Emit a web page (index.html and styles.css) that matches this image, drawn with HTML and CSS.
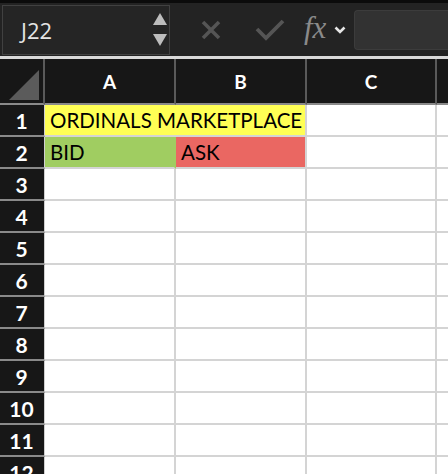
FILE: index.html
```html
<!DOCTYPE html>
<html>
<head>
<meta charset="utf-8">
<link rel="stylesheet" href="styles.css">
</head>
<body>
<div class="app">
  <div class="toolbar">
    <div class="namebox">
      <span class="ref">J22</span>
      <div class="spin">
        <svg width="14" height="12" viewBox="0 0 14 12"><polygon points="7,0 14,12 0,12" fill="#bdbdbd"/></svg>
        <svg width="14" height="12" viewBox="0 0 14 12"><polygon points="0,0 14,0 7,12" fill="#bdbdbd"/></svg>
      </div>
    </div>
    <div class="tools">
      <svg class="ic-x" width="20" height="20" viewBox="0 0 20 20"><path d="M2 2 L18 18 M18 2 L2 18" stroke="#555" stroke-width="3.6"/></svg>
      <svg class="ic-check" width="30" height="22" viewBox="0 0 30 22"><path d="M2 10 L11 19 L28 2" stroke="#555" stroke-width="3.8" fill="none"/></svg>
      <span class="fx">fx</span>
      <svg class="ic-chev" width="12" height="8" viewBox="0 0 12 8"><path d="M1.5 1.5 L6 6 L10.5 1.5" stroke="#e6e6e6" stroke-width="2.6" fill="none"/></svg>
      <div class="formula"></div>
    </div>
  </div>
  <div class="sep"></div>
  <div class="sheet">
    <div class="row head">
      <div class="rh corner"><svg width="30" height="30" viewBox="0 0 30 30"><polygon points="30,0 30,30 0,30" fill="#5b5b5b"/></svg></div>
      <div class="ch">A</div><div class="ch">B</div><div class="ch">C</div><div class="ch last"></div>
    </div>
    <div class="row"><div class="rh">1</div><div class="c span yellow">ORDINALS MARKETPLACE</div><div class="c"></div><div class="c"></div></div>
    <div class="row"><div class="rh">2</div><div class="c green">BID</div><div class="c red">ASK</div><div class="c"></div><div class="c"></div></div>
    <div class="row"><div class="rh">3</div><div class="c"></div><div class="c"></div><div class="c"></div><div class="c"></div></div>
    <div class="row"><div class="rh">4</div><div class="c"></div><div class="c"></div><div class="c"></div><div class="c"></div></div>
    <div class="row"><div class="rh">5</div><div class="c"></div><div class="c"></div><div class="c"></div><div class="c"></div></div>
    <div class="row"><div class="rh">6</div><div class="c"></div><div class="c"></div><div class="c"></div><div class="c"></div></div>
    <div class="row"><div class="rh">7</div><div class="c"></div><div class="c"></div><div class="c"></div><div class="c"></div></div>
    <div class="row"><div class="rh">8</div><div class="c"></div><div class="c"></div><div class="c"></div><div class="c"></div></div>
    <div class="row"><div class="rh">9</div><div class="c"></div><div class="c"></div><div class="c"></div><div class="c"></div></div>
    <div class="row"><div class="rh">10</div><div class="c"></div><div class="c"></div><div class="c"></div><div class="c"></div></div>
    <div class="row"><div class="rh">11</div><div class="c"></div><div class="c"></div><div class="c"></div><div class="c"></div></div>
    <div class="row"><div class="rh">12</div><div class="c"></div><div class="c"></div><div class="c"></div><div class="c"></div></div>
  </div>
</div>
</body>
</html>
```

FILE: styles.css
```css
* { box-sizing: border-box; }
html, body { margin: 0; padding: 0; background: #fff; }
body { width: 448px; height: 474px; overflow: hidden; font-family: Lato, "Open Sans", sans-serif; }
.app { width: 448px; }

.toolbar {
  height: 56px;
  background: #232323;
  border-top: 3px solid #0b0b0b;
  display: flex;
  align-items: center;
  padding-left: 2px;
}
.namebox {
  width: 168px;
  height: 50px;
  background: #252525;
  border: 1px solid #414141;
  display: flex;
  align-items: center;
  justify-content: space-between;
  padding: 0 2px 0 18px;
}
.ref { color: #e4e4e4; font-size: 22px; font-family: "Open Sans", sans-serif; }
.spin { display: flex; flex-direction: column; gap: 9px; }
.tools { display: flex; align-items: center; flex: 1; height: 100%; }
.ic-x { margin-left: 31px; }
.ic-check { margin-left: 34px; }
.fx {
  margin-left: 19px;
  font-family: "Liberation Serif", serif;
  font-style: italic;
  font-size: 31px;
  color: #8a8a8a;
  line-height: 1;
  margin-top: -5px;
}
.ic-chev { margin-left: 8px; }
.formula {
  margin-left: 8px;
  flex: 1;
  height: 40px;
  background: #323232;
  border: 1px solid #3c3c3c;
  border-right: none;
  border-radius: 4px 0 0 4px;
}

.sep { height: 3px; background: #d9d9d9; }

.row {
  display: grid;
  grid-template-columns: 45px 131px 131px 130px 1fr;
  height: 32px;
}
.row.head { height: 46px; }
.rh {
  background: #171717;
  color: #fff;
  font-size: 21px;
  font-weight: 700;
  display: flex;
  align-items: center;
  justify-content: center;
  border-bottom: 2px solid #8a8a8a;
  border-right: 1px solid #d0d0d0;
  padding-right: 1px;
}
.head .rh { border-right: 2px solid #5a5a5a; align-items: flex-end; justify-content: flex-end; padding: 0 4px 3px 0; }
.ch {
  background: #171717;
  color: #fff;
  font-size: 19px;
  font-weight: 700;
  display: flex;
  align-items: center;
  justify-content: center;
  border-bottom: 2px solid #8a8a8a;
  border-right: 2px solid #5a5a5a;
}
.ch.last { border-right: none; }
.c {
  background: #fff;
  border-bottom: 2px solid #d4d4d4;
  border-right: 2px solid #d4d4d4;
  font-size: 20.5px;
  color: #000;
  display: flex;
  align-items: center;
  padding-left: 5px;
  white-space: nowrap;
}
.c:last-child { border-right: none; }
.span { grid-column: span 2; }
.yellow { background: #ffff55; }
.green { background: #a0cd61; border-right-color: #a0cd61; }
.red { background: #ea6762; }
```
